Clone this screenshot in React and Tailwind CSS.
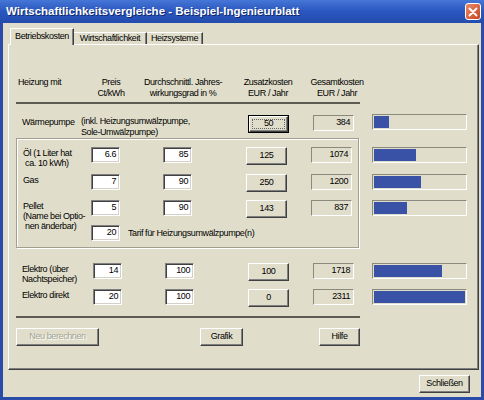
import React from 'react'

const MAX = 2311

// classic 3D borders
const raised = 'border border-t-white border-l-white border-r-[#404040] border-b-[#404040] shadow-[inset_-1px_-1px_0_#808080]'
const sunken = 'border border-t-[#808080] border-l-[#808080] border-r-white border-b-white shadow-[inset_1px_1px_0_#404040,inset_-1px_-1px_0_#d4d0c8]'
const thinSunken = 'border border-t-[#8a8a7c] border-l-[#8a8a7c] border-r-white border-b-white'

function Input({ value }) {
    return <div className={`${sunken} bg-white w-[29px] h-[16px] flex items-center justify-end pr-[3px]`}>{value}</div>
}

function Btn({ children, className = '', disabled, isDefault }) {
    if (isDefault) {
        return <div className={`border border-black ${className}`}>
            <div className={`${raised} h-full flex items-center justify-center p-[2px]`}>
                <div className="w-full h-full border border-dotted border-[#666] flex items-center justify-center">{children}</div>
            </div>
        </div>
    }
    return <div className={`${raised} flex items-center justify-center ${disabled ? 'text-[#a3a293] [text-shadow:1px_1px_0_white]' : ''} ${className}`}>
        {children}
    </div>
}

function Field({ value }) {
    return <div className={`${thinSunken} w-[41px] h-[16px] flex items-center justify-end pr-[3px]`}>{value}</div>
}

function Bar({ value }) {
    const w = Math.round(91 * value / MAX)
    return <div className={`${thinSunken} w-[95px] h-[16px] p-[1px]`}>
        <div className="h-full bg-[#3a52a6]" style={{ width: w }}></div>
    </div>
}

function Row({ label, preis, grad, zusatz, gesamt, labelW, isDefault }) {
    return <div className="flex items-start h-[18px]">
        <div className={`${labelW} pl-[6px] pt-[1px] leading-[10px] whitespace-nowrap`}>{label}</div>
        <Input value={preis}/>
        <div className="w-[43px]"></div>
        <Input value={grad}/>
        <div className="w-[54px]"></div>
        <Btn className="w-[41px] h-[18px]" isDefault={isDefault}>{zusatz}</Btn>
        <div className="w-[24px]"></div>
        <Field value={gesamt}/>
    </div>
}

export default function App() {
    return <div className="w-[484px] h-[400px] bg-[#2a4ca8] flex flex-col font-['Liberation_Sans',Arial,sans-serif] text-[9px] tracking-[-0.4px] text-black overflow-hidden">
        {/* title bar */}
        <div className="h-[23px] flex items-center justify-between pl-[6px] pr-[3px] bg-gradient-to-b from-[#4676d6] via-[#2a56bf] to-[#244cae]">
            <span className="text-white font-bold text-[11.5px] tracking-normal [text-shadow:1px_1px_0_#10286a]">Wirtschaftlichkeitsvergleiche - Beispiel-Ingenieurblatt</span>
            <div className="w-[16px] h-[17px] rounded-[3px] border border-white bg-gradient-to-br from-[#e88a6a] to-[#c8421e] flex items-center justify-center">
                <svg width="10" height="10" viewBox="0 0 10 10"><path d="M1.5 1.5 L8.5 8.5 M8.5 1.5 L1.5 8.5" stroke="white" strokeWidth="1.8" strokeLinecap="round"/></svg>
            </div>
        </div>

        {/* client area */}
        <div className="flex-1 mx-[3px] mb-[3px] bg-[#e0decb] flex flex-col">
            {/* tabs */}
            <div className="mt-[5px] ml-[7px] h-[16px] flex items-end">
                <div className="relative z-10 -mb-px h-[17px] w-[64px] bg-[#e0decb] border-t border-l border-t-white border-l-white border-r border-r-[#404040] shadow-[inset_-1px_0_0_#808080] flex items-center justify-center pb-[1px]">Betriebskosten</div>
                <div className="h-[12px] w-[73px] border-t border-t-white border-r border-r-[#404040] shadow-[inset_-1px_0_0_#808080] flex items-center justify-center">Wirtschaftlichkeit</div>
                <div className="h-[12px] w-[56px] border-t border-t-white border-r border-r-[#404040] shadow-[inset_-1px_0_0_#808080] flex items-center justify-center">Heizsysteme</div>
            </div>

            {/* tab panel */}
            <div className={`ml-[5px] mr-[2px] h-[326px] ${raised} pl-[7px] flex flex-col`}>
                {/* header */}
                <div className="mt-[32px] flex leading-[11px] h-[22px] whitespace-nowrap">
                    <div className="w-[70px] pl-[2px]">Heizung mit</div>
                    <div className="w-[50px] text-center">Preis<br/>Ct/kWh</div>
                    <div className="w-[94px] text-center">Durchschnittl. Jahres-<br/>wirkungsgrad in %</div>
                    <div className="w-[76px] text-center">Zusatzkosten<br/>EUR / Jahr</div>
                    <div className="w-[62px] text-center">Gesamtkosten<br/>EUR / Jahr</div>
                </div>
                <div className="mt-[3px] w-[344px] h-[2px] bg-[#5c5c52]"></div>

                {/* Wärmepumpe */}
                <div className="mt-[11px] flex items-start">
                    <div className="flex items-start h-[18px]">
                        <div className="w-[65px] pl-[6px] pt-[1px] whitespace-nowrap">Wärmepumpe</div>
                        <div className="w-[167px] pt-[1px] leading-[11px] whitespace-nowrap">(inkl. Heizungsumwälzpumpe,<br/>Sole-Umwälzpumpe)</div>
                        <Btn className="w-[41px] h-[18px]" isDefault>50</Btn>
                        <div className="w-[24px]"></div>
                        <Field value="384"/>
                    </div>
                    <div className="ml-[18px] -mt-px"><Bar value={384}/></div>
                </div>

                {/* group box */}
                <div className="mt-[5px] flex items-start">
                    <div className="w-[343px] h-[110px] border border-[#a09f90] shadow-[inset_1px_1px_0_white,1px_1px_0_white] pt-[8px] flex flex-col">
                        <Row labelW="w-[74px]" label={<>Öl (1 Liter hat<br/>&nbsp;ca. 10 kWh)</>} preis="6.6" grad="85" zusatz="125" gesamt="1074"/>
                        <div className="mt-[9px]"><Row labelW="w-[74px]" label="Gas" preis="7" grad="90" zusatz="250" gesamt="1200"/></div>
                        <div className="mt-[8px]"><Row labelW="w-[74px]" label={<>Pellet<br/>(Name bei Optio-<br/>&nbsp;nen änderbar)</>} preis="5" grad="90" zusatz="143" gesamt="837"/></div>
                        <div className="mt-[7px] flex items-start">
                            <div className="w-[74px]"></div>
                            <Input value="20"/>
                            <div className="ml-[8px] pt-[3px] leading-[10px] whitespace-nowrap">Tarif für Heizungsumwälzpumpe(n)</div>
                        </div>
                    </div>
                    <div className="ml-[13px] pt-[9px] flex flex-col">
                        <div className="h-[18px]"><Bar value={1074}/></div>
                        <div className="mt-[9px] h-[18px]"><Bar value={1200}/></div>
                        <div className="mt-[8px] h-[18px]"><Bar value={837}/></div>
                    </div>
                </div>

                {/* Elektro */}
                <div className="mt-[15px] flex items-start">
                    <Row labelW="w-[77px]" label={<>Elektro (über<br/>Nachtspeicher)</>} preis="14" grad="100" zusatz="100" gesamt="1718"/>
                    <div className="ml-[18px]"><Bar value={1718}/></div>
                </div>
                <div className="mt-[8px] flex items-start">
                    <Row labelW="w-[77px]" label="Elektro direkt" preis="20" grad="100" zusatz="0" gesamt="2311"/>
                    <div className="ml-[18px]"><Bar value={2311}/></div>
                </div>

                <div className="mt-[9px] w-[344px] h-[2px] bg-[#5c5c52]"></div>

                {/* buttons */}
                <div className="mt-[10px] flex">
                    <Btn className="w-[83px] h-[18px]" disabled>Neu berechnen</Btn>
                    <div className="w-[101px]"></div>
                    <Btn className="w-[43px] h-[18px]">Grafik</Btn>
                    <div className="w-[76px]"></div>
                    <Btn className="w-[41px] h-[18px]">Hilfe</Btn>
                </div>
            </div>

            <div className="mt-[5px] mr-[11px] flex justify-end">
                <Btn className="w-[51px] h-[18px]">Schließen</Btn>
            </div>
        </div>
    </div>
}
